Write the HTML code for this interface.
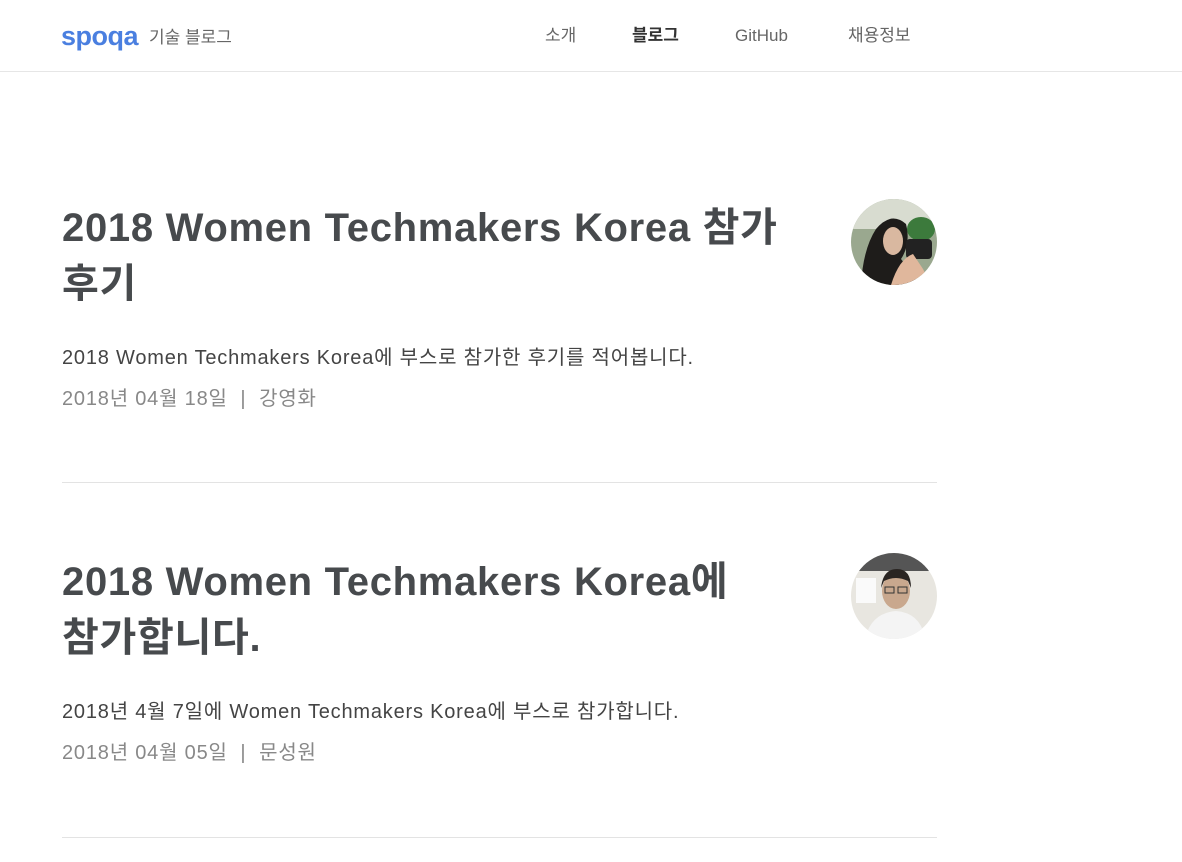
<!DOCTYPE html>
<html><head><meta charset="utf-8"><style>
*{margin:0;padding:0;box-sizing:border-box}
body{width:1182px;height:862px;overflow:hidden;background:#fff;font-family:"Liberation Sans","Noto Sans CJK KR",sans-serif;color:#444}
.hdr{height:72px;border-bottom:1px solid #e6e6e6;position:relative}
.logo{position:absolute;left:61px;top:20px;font-size:27px;font-weight:bold;color:#4a7fe0;letter-spacing:-0.5px;line-height:32px}
.sub{position:absolute;left:149px;top:26px;font-size:17px;color:#666;line-height:24px}
.nav a{position:absolute;top:24px;font-size:17px;color:#666;text-decoration:none;line-height:24px}
.post{position:absolute;left:62px;width:875px}
h1{font-size:40px;line-height:56px;color:#474a4d;font-weight:bold;width:740px;letter-spacing:0.7px;word-break:keep-all}
.desc{font-size:20px;color:#444;margin-top:32px;line-height:28px;letter-spacing:0.8px}
.meta{font-size:20px;color:#888;margin-top:13px;line-height:28px;letter-spacing:0.8px}
.av{position:absolute;right:0;top:0;width:86px;height:86px;border-radius:50%;overflow:hidden}
.hr{position:absolute;left:62px;width:875px;height:1px;background:#e3e3e3}
</style></head><body>
<div class="hdr">
<div class="logo">spoqa</div><div class="sub">기술 블로그</div>
<div class="nav"><a style="left:545px">소개</a><a style="left:632px;color:#333;font-weight:bold">블로그</a><a style="left:735px">GitHub</a><a style="left:848px">채용정보</a></div>
</div>
<div class="post" style="top:200px">
<h1>2018 Women Techmakers Korea 참가 후기</h1>
<div class="desc">2018 Women Techmakers Korea에 부스로 참가한 후기를 적어봅니다.</div>
<div class="meta">2018년 04월 18일 &nbsp;| &nbsp;강영화</div>
<div class="av" style="top:-1px"><svg width="86" height="86"><rect width="86" height="86" fill="#9aa88f"/><rect x="0" y="0" width="86" height="30" fill="#d8dcd0"/><ellipse cx="70" cy="30" rx="14" ry="12" fill="#3c7a3c"/><path d="M10 86 Q12 50 25 30 Q40 12 55 25 Q60 45 50 60 L70 86Z" fill="#1e1c1a"/><ellipse cx="42" cy="42" rx="10" ry="14" fill="#d9b8a0"/><rect x="55" y="40" width="26" height="20" rx="4" fill="#222"/><path d="M40 86 Q48 60 62 55 L72 70 L80 86Z" fill="#e0b79c"/></svg></div>
</div>
<div class="hr" style="top:482px"></div>
<div class="post" style="top:554px">
<h1>2018 Women Techmakers Korea에 참가합니다.</h1>
<div class="desc">2018년 4월 7일에 Women Techmakers Korea에 부스로 참가합니다.</div>
<div class="meta">2018년 04월 05일 &nbsp;| &nbsp;문성원</div>
<div class="av" style="top:-1px"><svg width="86" height="86"><rect width="86" height="86" fill="#e8e6e0"/><rect x="0" y="0" width="86" height="18" fill="#555"/><rect x="5" y="25" width="20" height="25" fill="#fafafa"/><ellipse cx="45" cy="38" rx="14" ry="18" fill="#c9a88e"/><path d="M30 35 Q32 16 46 16 Q60 16 60 35 L57 28 Q45 22 33 28Z" fill="#2a2522"/><rect x="34" y="34" width="9" height="6" fill="none" stroke="#333"/><rect x="47" y="34" width="9" height="6" fill="none" stroke="#333"/><path d="M14 86 Q20 60 45 58 Q70 60 74 86Z" fill="#f4f4f4"/></svg></div>
</div>
<div class="hr" style="top:837px"></div>
</body></html>
